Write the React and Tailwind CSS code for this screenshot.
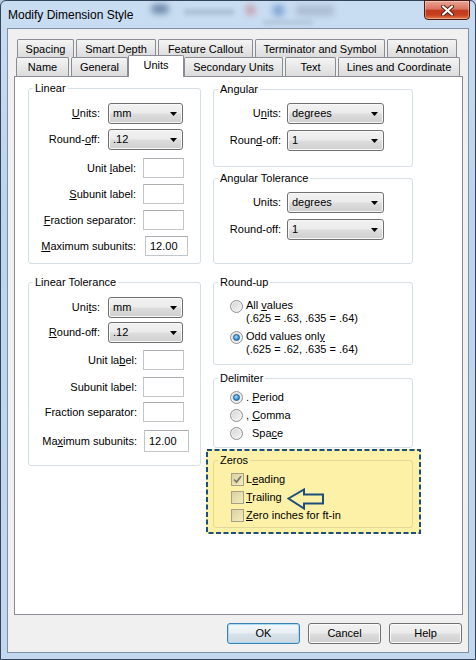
import React from "react";

// access key underline
function Acc({ children }) {
  return <span className="underline">{children}</span>;
}

function Arrow() {
  return (
    <svg width="7" height="4" viewBox="0 0 7 4">
      <path d="M0 0h7L3.5 4z" fill="#000" />
    </svg>
  );
}

function Combo({ value, className }) {
  return (
    <div
      className={
        "flex items-center justify-between rounded-[3px] border border-[#707070] bg-[linear-gradient(#f2f2f2,#ebebeb_48%,#dddddd_52%,#cfcfcf)] pl-[4px] pr-[5px] shadow-[inset_0_0_0_1px_#f8f8f8] " +
        className
      }
    >
      <span>{value}</span>
      <Arrow />
    </div>
  );
}

function Field({ value, className }) {
  return (
    <div
      className={
        "flex items-center border border-[#c2c5ca] border-t-[#abadb3] bg-white pl-[4px] " +
        className
      }
    >
      {value}
    </div>
  );
}

function Radio({ checked }) {
  return (
    <span className="flex h-[13px] w-[13px] shrink-0 items-center justify-center rounded-full border border-[#8e8f8f] bg-[linear-gradient(135deg,#d2d2d2,#f8f8f8)] shadow-[inset_0_0_0_1px_#f2f2f2]">
      {checked && (
        <span className="h-[7px] w-[7px] rounded-full border border-[#1d5a8c] bg-[radial-gradient(circle_at_40%_35%,#9fdcff,#2a8ad4_70%)]" />
      )}
    </span>
  );
}

function Check({ checked }) {
  return (
    <span className="flex h-[13px] w-[13px] shrink-0 items-center justify-center border border-[#a8a185] bg-[linear-gradient(135deg,#d9d1a2,#f6edbd)]">
      {checked && (
        <svg width="9" height="9" viewBox="0 0 9 9">
          <path d="M1 4.5l2.5 2.6L8 1.3" fill="none" stroke="#7b786a" strokeWidth="1.7" />
        </svg>
      )}
    </span>
  );
}

function Tab({ label, className }) {
  return (
    <div
      className={
        "flex shrink-0 items-center justify-center rounded-t-[2px] border-x border-t border-[#898c95] bg-[linear-gradient(#f4f4f4,#e8e8e8_50%,#dcdcdc)] " +
        className
      }
    >
      {label}
    </div>
  );
}

function Group({ title, className, children }) {
  return (
    <fieldset className={"rounded-[3px] border border-[#d5dfe5] " + className}>
      <legend className="ml-[4px] px-[2px] leading-[13px]">{title}</legend>
      {children}
    </fieldset>
  );
}

function Button({ label, primary }) {
  return (
    <div
      className={
        primary
          ? "flex h-[21px] w-[73px] items-center justify-center rounded-[3px] border border-[#3c7fb1] bg-[linear-gradient(#f4f8fb,#e8eef3_48%,#d8e2ea_52%,#cdd7df)] shadow-[inset_0_0_0_1px_#a9dcf6]"
          : "flex h-[21px] w-[73px] items-center justify-center rounded-[3px] border border-[#707070] bg-[linear-gradient(#f2f2f2,#ebebeb_48%,#dddddd_52%,#cfcfcf)] shadow-[inset_0_0_0_1px_#fbfbfb]"
      }
    >
      {label}
    </div>
  );
}

export default function App() {
  return (
    <div className="h-[660px] w-[476px] bg-[#b7cde5] font-['Liberation_Sans',Arial,sans-serif] text-[11px] text-black">
      <div className="flex h-[660px] w-[476px] flex-col rounded-t-[6px] border border-[#34455a] bg-[linear-gradient(#c9ddf2,#bcd4ee_30%,#c2d8f0)]">
        {/* title bar */}
        <div className="relative flex h-[27px] shrink-0 items-start">
          <div className="absolute left-[150px] top-[3px] h-[10px] w-[18px] rounded-full bg-[#1d3d6b] opacity-50 blur-[3px]" />
          <div className="absolute left-[183px] top-[8px] h-[6px] w-[50px] bg-[#6a7f99] opacity-30 blur-[2px]" />
          <div className="absolute left-[245px] top-[4px] h-[10px] w-[9px] bg-[#c0504d] opacity-40 blur-[3px]" />
          <div className="absolute left-[272px] top-[4px] h-[11px] w-[11px] bg-[#3b6fb6] opacity-50 blur-[3px]" />
          <div className="absolute left-[295px] top-[4px] h-[11px] w-[38px] bg-[#6c7a91] opacity-30 blur-[3px]" />
          <div className="absolute left-[262px] top-[19px] h-[5px] w-[50px] bg-[#7a8aa0] opacity-25 blur-[2px]" />
          <span className="relative pl-[7px] pt-[7px] text-[12px] leading-[15px]">Modify Dimension Style</span>
          <div className="relative -mt-px ml-auto mr-[5px] flex h-[20px] w-[46px] items-center justify-center rounded-b-[4px] border border-[#4a1a12] bg-[linear-gradient(#eaa595,#d9735f_45%,#c23a1f_52%,#c6401f_78%,#e27c4c)] shadow-[inset_0_0_0_1px_rgba(255,255,255,0.35)]">
            <svg width="13" height="11" viewBox="0 0 13 11">
              <path d="M2 1.5l9 8M11 1.5l-9 8" stroke="#5a1a12" strokeWidth="4" strokeLinecap="round" />
              <path d="M2 1.5l9 8M11 1.5l-9 8" stroke="#fff" strokeWidth="2.2" strokeLinecap="round" />
            </svg>
          </div>
        </div>

        {/* client area */}
        <div className="mx-[6px] mb-[6px] flex flex-1 flex-col border border-[#7f8fa3] bg-[#f0f0f0] pb-[8px] pl-[6px] pr-[5px] pt-[10px]">
          {/* back row of tabs */}
          <div className="flex h-[18px] gap-[2px] pl-[3px]">
            <Tab label="Spacing" className="w-[57px] pt-[1px]" />
            <Tab label="Smart Depth" className="w-[80px] pt-[1px]" />
            <Tab label="Feature Callout" className="w-[95px] pt-[1px]" />
            <Tab label="Terminator and Symbol" className="w-[130px] pt-[1px]" />
            <Tab label="Annotation" className="w-[70px] pt-[1px]" />
          </div>
          {/* front row of tabs */}
          <div className="flex h-[19px] gap-[2px] pl-[2px]">
            <Tab label="Name" className="w-[53px]" />
            <Tab label="General" className="w-[57px]" />
            <div className="relative z-10 -mx-[2px] -mt-[2px] flex h-[22px] w-[56px] shrink-0 items-center justify-center rounded-t-[2px] border-x border-t border-[#898c95] bg-white pb-[2px]">
              Units
            </div>
            <Tab label="Secondary Units" className="w-[99px]" />
            <Tab label="Text" className="w-[51px]" />
            <Tab label="Lines and Coordinate" className="w-[122px]" />
          </div>

          {/* tab page */}
          <div className="flex h-[539px] gap-[12px] border border-[#898c95] bg-white pl-[13px] pt-[5px]">
            <div className="flex w-[173px] flex-col">
              <Group title="Linear" className="h-[182px]">
                <div className="mt-[8px] flex items-center">
                  <span className="w-[71px] text-right"><Acc>U</Acc>nits:</span>
                  <Combo value="mm" className="ml-[8px] h-[21px] w-[75px]" />
                </div>
                <div className="mt-[5px] flex items-center">
                  <span className="w-[71px] text-right">Round-<Acc>o</Acc>ff:</span>
                  <Combo value=".12" className="ml-[8px] h-[21px] w-[75px]" />
                </div>
                <div className="mt-[8px] flex items-center">
                  <span className="w-[107px] text-right">Unit <Acc>l</Acc>abel:</span>
                  <Field className="ml-[7px] h-[20px] w-[41px]" />
                </div>
                <div className="mt-[6px] flex items-center">
                  <span className="w-[107px] text-right"><Acc>S</Acc>ubunit label:</span>
                  <Field className="ml-[7px] h-[20px] w-[41px]" />
                </div>
                <div className="mt-[6px] flex items-center">
                  <span className="w-[107px] text-right"><Acc>F</Acc>raction separator:</span>
                  <Field className="ml-[7px] h-[20px] w-[41px]" />
                </div>
                <div className="mt-[6px] flex items-center">
                  <span className="w-[107px] text-right"><Acc>M</Acc>aximum subunits:</span>
                  <Field value="12.00" className="ml-[9px] h-[20px] w-[43px]" />
                </div>
              </Group>

              <Group title="Linear Tolerance" className="mt-[12px] h-[190px]">
                <div className="mt-[8px] flex items-center">
                  <span className="w-[71px] text-right">Uni<Acc>t</Acc>s:</span>
                  <Combo value="mm" className="ml-[8px] h-[21px] w-[75px]" />
                </div>
                <div className="mt-[4px] flex items-center">
                  <span className="w-[71px] text-right"><Acc>R</Acc>ound-off:</span>
                  <Combo value=".12" className="ml-[8px] h-[21px] w-[75px]" />
                </div>
                <div className="mt-[7px] flex items-center">
                  <span className="w-[108px] text-right">Unit la<Acc>b</Acc>el:</span>
                  <Field className="ml-[6px] h-[20px] w-[41px]" />
                </div>
                <div className="mt-[7px] flex items-center">
                  <span className="w-[108px] text-right">Subunit label:</span>
                  <Field className="ml-[6px] h-[20px] w-[41px]" />
                </div>
                <div className="mt-[5px] flex items-center">
                  <span className="w-[108px] text-right">Fraction separator:</span>
                  <Field className="ml-[6px] h-[20px] w-[41px]" />
                </div>
                <div className="mt-[8px] flex items-center">
                  <span className="w-[108px] text-right">Ma<Acc>x</Acc>imum subunits:</span>
                  <Field value="12.00" className="ml-[7px] h-[22px] w-[45px]" />
                </div>
              </Group>
            </div>

            <div className="flex w-[200px] flex-col">
              <Group title="Angular" className="mt-[1px] h-[84px]">
                <div className="mt-[7px] flex items-center">
                  <span className="w-[67px] text-right">U<Acc>n</Acc>its:</span>
                  <Combo value="degrees" className="ml-[6px] h-[21px] w-[97px]" />
                </div>
                <div className="mt-[6px] flex items-center">
                  <span className="w-[67px] text-right">Roun<Acc>d</Acc>-off:</span>
                  <Combo value="1" className="ml-[6px] h-[21px] w-[97px]" />
                </div>
              </Group>

              <Group title="Angular Tolerance" className="mt-[5px] h-[92px]">
                <div className="mt-[7px] flex items-center">
                  <span className="w-[67px] text-right">Units:</span>
                  <Combo value="degrees" className="ml-[6px] h-[21px] w-[97px]" />
                </div>
                <div className="mt-[6px] flex items-center">
                  <span className="w-[67px] text-right">Round-off:</span>
                  <Combo value="1" className="ml-[6px] h-[21px] w-[97px]" />
                </div>
              </Group>

              <Group title="Round-up" className="mt-[12px] h-[89px]">
                <div className="mt-[10px] flex items-start pl-[16px]">
                  <span className="mt-[1px]"><Radio /></span>
                  <div className="ml-[3px] leading-[13px]">
                    <div>All <Acc>v</Acc>alues</div>
                    <div>(.625 = .63, .635 = .64)</div>
                  </div>
                </div>
                <div className="mt-[5px] flex items-start pl-[16px]">
                  <span className="mt-[1px]"><Radio checked /></span>
                  <div className="ml-[3px] leading-[13px]">
                    <div>Odd values onl<Acc>y</Acc></div>
                    <div>(.625 = .62, .635 = .64)</div>
                  </div>
                </div>
              </Group>

              <Group title="Delimiter" className="mt-[7px] h-[76px]">
                <div className="mt-[3px] flex h-[18px] items-center pl-[16px]">
                  <Radio checked />
                  <span className="ml-[3px]">. <Acc>P</Acc>eriod</span>
                </div>
                <div className="flex h-[18px] items-center pl-[16px]">
                  <Radio />
                  <span className="ml-[3px]">, <Acc>C</Acc>omma</span>
                </div>
                <div className="flex h-[18px] items-center pl-[16px]">
                  <Radio />
                  <span className="ml-[9px]">Spa<Acc>c</Acc>e</span>
                </div>
              </Group>

              {/* highlighted zeros group */}
              <div className="relative -ml-[7px] -mr-[8px] mt-[1px] h-[85px] bg-[#fdf1a8] pb-[6px] pl-[7px] pr-[8px] pt-[5px]">
                <svg className="absolute inset-0" width="215" height="85">
                  <rect x="1" y="1" width="213" height="83" fill="none" stroke="#1d4f7c" strokeWidth="2" strokeDasharray="5 2.5" />
                </svg>
                <fieldset className="relative h-[74px] rounded-[3px] border border-[#e3d79a]">
                  <legend className="ml-[4px] px-[2px] leading-[13px]">Zeros</legend>
                  <div className="mt-[3px] flex h-[18px] items-center pl-[17px]">
                    <Check checked />
                    <span className="ml-[2px]">L<Acc>e</Acc>ading</span>
                  </div>
                  <div className="flex h-[18px] items-center pl-[17px]">
                    <Check />
                    <span className="ml-[2px]"><Acc>T</Acc>railing</span>
                    <svg className="ml-[5px] mt-[3px] shrink-0" width="38" height="22" viewBox="0 0 38 22">
                      <path
                        d="M1.5 10.5L17 1.5V6.5H36V15.5H17V20.5Z"
                        fill="none"
                        stroke="#1d4f7c"
                        strokeWidth="2"
                        strokeLinejoin="miter"
                      />
                    </svg>
                  </div>
                  <div className="flex h-[18px] items-center pl-[17px]">
                    <Check />
                    <span className="ml-[2px]"><Acc>Z</Acc>ero inches for ft-in</span>
                  </div>
                </fieldset>
              </div>
            </div>
          </div>

          {/* dialog buttons */}
          <div className="mt-[8px] flex justify-end gap-[8px] pr-[1px]">
            <Button label="OK" primary />
            <Button label="Cancel" />
            <Button label="Help" />
          </div>
        </div>
      </div>
    </div>
  );
}
